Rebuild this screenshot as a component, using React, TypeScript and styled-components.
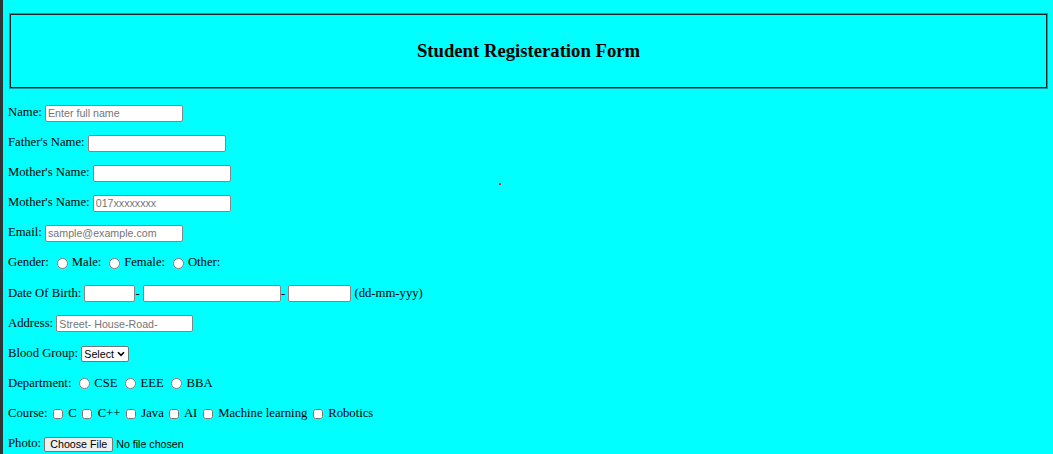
import React from "react";
import styled, { createGlobalStyle } from "styled-components";

const Global = createGlobalStyle`
  html {
    background: linear-gradient(to right, #2e3838 0, #2e3838 3px, #00ffff 3px);
    min-height: 100%;
  }
  body {
    margin: 0;
    font-family: "Liberation Serif", "Times New Roman", serif;
    font-size: 12.7px;
    color: #000;
  }
`;

const Page = styled.div`
  position: relative;
  width: 1053px;
  height: 454px;
  overflow: hidden;
`;

const Header = styled.div`
  margin: 13px 5px 0 9px;
  height: 76px;
  box-sizing: border-box;
  border: 1px solid #1a9a9a;
  box-shadow: inset 0 0 0 1px #142020;
  display: flex;
  align-items: center;
  justify-content: center;
`;

const Title = styled.h2`
  margin: 0;
  font-size: 18.7px;
  font-weight: bold;
  font-family: "Liberation Serif", "Times New Roman", serif;
`;

const Form = styled.form`
  margin-top: 8px;
  padding-left: 8px;
`;

const Row = styled.div`
  height: 30.1px;
  line-height: 30.1px;
  white-space: nowrap;
`;

const TextInput = styled.input<{ $w?: number }>`
  box-sizing: border-box;
  width: ${(p) => p.$w ?? 138}px;
  height: 17px;
  padding: 1px 2px;
  margin: 0;
  border: 1px solid #858585;
  border-radius: 2px;
  background: #fff;
  font-family: "Liberation Sans", Arial, sans-serif;
  font-size: 10.67px;
  vertical-align: middle;
  &::placeholder {
    color: #757575;
  }
`;

const Radio = styled.input.attrs({ type: "radio" })`
  width: 11px;
  height: 11px;
  margin: 0 1px 0 4.5px;
  vertical-align: middle;
`;

const Check = styled.input.attrs({ type: "checkbox" })`
  width: 10px;
  height: 10px;
  margin: 0 2.5px 0 2px;
  vertical-align: middle;
`;

const SelectBox = styled.span`
  position: relative;
  display: inline-block;
  vertical-align: middle;
  line-height: 0;
`;

const Select = styled.select`
  box-sizing: border-box;
  appearance: none;
  -webkit-appearance: none;
  width: 48px;
  height: 16px;
  margin: 0;
  padding: 0 12px 0 2px;
  border: 1px solid #767676;
  border-radius: 2px;
  background: #fff;
  color: #000;
  font-family: "Liberation Sans", Arial, sans-serif;
  font-size: 10.67px;
`;

const Chevron = styled.svg`
  position: absolute;
  right: 4px;
  top: 5px;
  width: 8px;
  height: 6px;
  pointer-events: none;
`;

const FileButton = styled.button`
  box-sizing: border-box;
  height: 15px;
  padding: 0 5px;
  border: 1px solid #767676;
  border-radius: 2px;
  background: #efefef;
  font-family: "Liberation Sans", Arial, sans-serif;
  font-size: 10.67px;
  line-height: 13px;
  vertical-align: middle;
  margin-left: 0;
`;

const FileText = styled.span`
  font-family: "Liberation Sans", Arial, sans-serif;
  font-size: 10.67px;
  margin-left: 3px;
  vertical-align: middle;
`;

const Dot = styled.div`
  position: absolute;
  left: 499px;
  top: 183px;
  width: 2px;
  height: 2px;
  background: #e0202a;
`;

export default function App() {
  return (
    <Page>
      <Global />
      <Header>
        <Title>Student Registeration Form</Title>
      </Header>
      <Form onSubmit={(e) => e.preventDefault()}>
        <Row>
          Name: <TextInput placeholder="Enter full name" />
        </Row>
        <Row>
          Father's Name: <TextInput />
        </Row>
        <Row>
          Mother's Name: <TextInput />
        </Row>
        <Row>
          Mother's Name: <TextInput placeholder="017xxxxxxxx" />
        </Row>
        <Row>
          Email: <TextInput placeholder="sample@example.com" />
        </Row>
        <Row>
          Gender: <Radio name="g" /> Male: <Radio name="g" /> Female: <Radio name="g" /> Other:
        </Row>
        <Row>
          Date Of Birth: <TextInput $w={51} />- <TextInput $w={138} />- <TextInput $w={63} /> (dd-mm-yyy)
        </Row>
        <Row>
          Address: <TextInput $w={137} placeholder="Street- House-Road-" />
        </Row>
        <Row>
          Blood Group:{" "}
          <SelectBox>
            <Select defaultValue="">
              <option value="">Select</option>
              <option>A+</option>
              <option>B+</option>
              <option>O+</option>
              <option>AB+</option>
            </Select>
            <Chevron viewBox="0 0 8 6">
              <path d="M1 1.2 L4 4.4 L7 1.2" fill="none" stroke="#000" strokeWidth="1.6" />
            </Chevron>
          </SelectBox>
        </Row>
        <Row>
          Department: <Radio name="d" /> CSE <Radio name="d" /> EEE <Radio name="d" /> BBA
        </Row>
        <Row>
          Course: <Check /> C <Check /> C++ <Check /> Java <Check /> AI <Check /> Machine learning <Check /> Robotics
        </Row>
        <Row>
          Photo: <FileButton type="button">Choose File</FileButton>
          <FileText>No file chosen</FileText>
        </Row>
      </Form>
      <Dot />
    </Page>
  );
}
